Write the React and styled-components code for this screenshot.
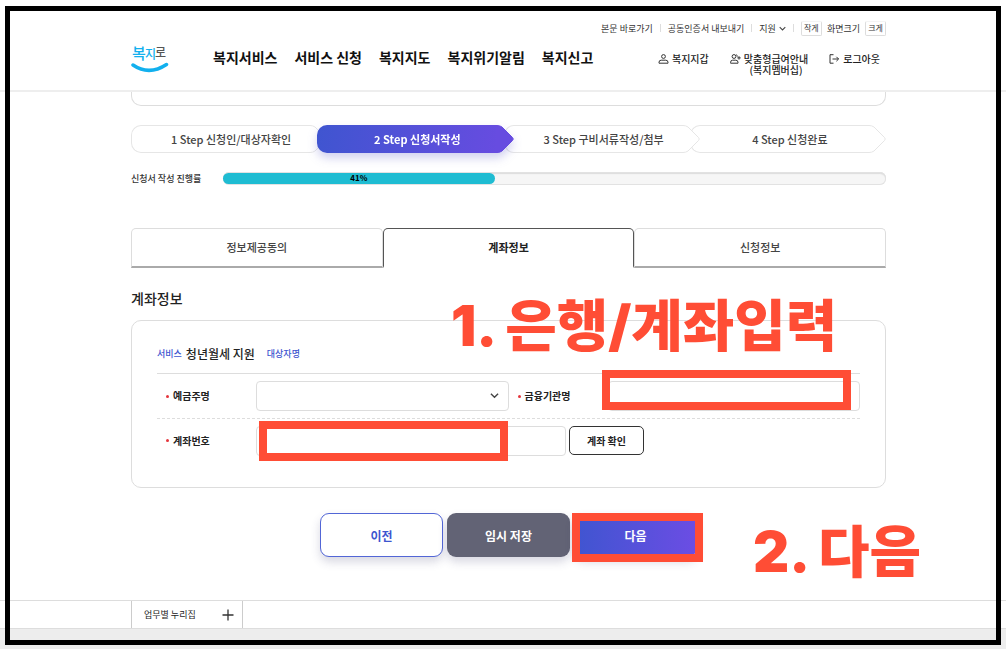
import React from "react";
import styled, { createGlobalStyle, css } from "styled-components";

const GlobalStyle = createGlobalStyle`
    * {
        box-sizing: border-box;
    }
    body {
        margin: 0;
        background: #ededed;
        color: #222;
        font-family: "Noto Sans CJK KR", "Noto Sans", sans-serif;
        font-size: 10px;
        line-height: 1;
    }
    button, input, select {
        font-family: inherit;
    }
    a {
        color: inherit;
        text-decoration: none;
    }
`;

const Page = styled.div`
    position: relative;
    min-height: 100vh;
    background: #ededed;
`;

const White = styled.div`
    background: #fff;
`;

const gutters = css`
    padding-left: 131px;
    padding-right: 120px;
`;

const Header = styled.header`
    ${gutters}
    display: flex;
    align-items: flex-start;
    padding-top: 20px;
    padding-bottom: 15px;
    border-bottom: 2px solid #eee;
`;

const LogoLink = styled.a`
    margin-top: 16px;
    width: 40px;
    height: 39px;
`;

const Nav = styled.nav`
    display: flex;
    gap: 17px;
    margin-top: 27px;
    margin-left: 42px;
    font-size: 14px;
    line-height: 20px;
    font-weight: 700;
    color: #111;
    white-space: nowrap;
`;

const HeaderRight = styled.div`
    margin-left: auto;
    white-space: nowrap;
`;

const Utility = styled.div`
    display: flex;
    align-items: center;
    justify-content: flex-end;
    gap: 7px;
    height: 16px;
    font-size: 9px;
    color: #333;
`;

const Bar = styled.span`
    width: 1px;
    height: 8px;
    background: #ddd;
`;

const Support = styled.a`
    display: flex;
    align-items: center;
    gap: 3px;
`;

const SizeGroup = styled.span`
    display: flex;
    align-items: center;
    gap: 5px;
`;

const SizeButton = styled.button`
    width: 21px;
    height: 15px;
    padding: 0;
    border: 1px solid #ddd;
    border-top-color: #f4f4f4;
    border-radius: 2px;
    background: #fff;
    color: #333;
    font-size: 8px;
    line-height: 12px;
`;

const MemberMenu = styled.div`
    display: flex;
    justify-content: flex-end;
    gap: 21px;
    margin-top: 17px;
    padding-right: 6px;
`;

const MemberLink = styled.a`
    display: flex;
    align-items: flex-start;
    gap: 3px;
    font-size: 10px;
    line-height: 11px;
    font-weight: 500;
    text-align: center;

    svg {
        margin-top: 1px;
    }
`;

const Main = styled.main`
    ${gutters}
    padding-bottom: 43px;
`;

const PreviousCard = styled.div`
    height: 14px;
    border: 1px solid #ddd;
    border-top: 0;
    border-radius: 0 0 10px 10px;
`;

const Steps = styled.ol`
    display: flex;
    margin: 19px 0 0;
    padding: 0 10px 0 0;
    list-style: none;
`;

const StepItem = styled.li`
    position: relative;
    flex: 1;
    display: flex;
    align-items: center;
    justify-content: center;
    height: 28px;
    margin-right: -10px;
    padding-left: 4px;
    z-index: ${(props) => props.$level};
    font-size: 11px;
    font-weight: ${(props) => (props.$active ? 700 : 500)};
    color: ${(props) => (props.$active ? "#fff" : "#444")};
    ${(props) => props.$active && "filter: drop-shadow(0 5px 5px rgba(70, 70, 190, 0.25));"}

    &::before {
        content: "";
        position: absolute;
        inset: 0 18px 0 0;
        border: ${(props) => (props.$active ? "0" : "1px solid #e6e6e6")};
        border-right: 0;
        border-radius: 10px 0 0 10px;
        background: ${(props) => (props.$active ? "linear-gradient(100deg, #3f55d0, #674ce0)" : "#fff")};
    }
`;

const StepText = styled.span`
    position: relative;
    white-space: nowrap;
`;

const StepTip = styled.svg`
    position: absolute;
    top: 0;
    right: 0;
`;

const Progress = styled.div`
    display: flex;
    align-items: center;
    margin-top: 19px;
    color: #333;
`;

const ProgressLabel = styled.span`
    width: 92px;
    font-size: 9px;
    line-height: 12px;
    font-weight: 500;
    white-space: nowrap;
`;

const ProgressTrack = styled.div`
    flex: 1;
    height: 13px;
    padding: 1px 0;
    border-radius: 6px;
    background: #f6f6f6;
    box-shadow: inset 0 0 0 1px #e2e2e2, inset 0 2px 1px #ddd;
`;

const ProgressFill = styled.div`
    height: 11px;
    border-radius: 6px;
    background: #1fbcd2;
    color: #000;
    font-size: 8px;
    line-height: 10px;
    font-weight: 700;
    text-align: center;
`;

const Tabs = styled.div`
    display: flex;
    margin-top: 43px;
`;

const Tab = styled.button`
    flex: 1;
    height: 40px;
    padding: 0 0 2px;
    border: 1px solid #ddd;
    border-bottom: 2px solid #aaa;
    border-radius: 5px 5px 0 0;
    background: #fff;
    font-size: 11px;
    font-weight: 500;
    color: #444;
    ${(props) =>
        props.$active &&
        css`
            border-color: #555;
            border-bottom-color: transparent;
            font-weight: 700;
            color: #222;
        `}
`;

const Title = styled.h2`
    margin: 20px 0 12px;
    font-size: 14px;
    line-height: 20px;
    font-weight: 500;
`;

const Card = styled.section`
    position: relative;
    padding: 22px 25px 25px;
    border: 1px solid #ddd;
    border-radius: 10px;
`;

const Summary = styled.div`
    display: flex;
    align-items: center;
    height: 31px;
    padding-bottom: 8px;
    border-bottom: 1px solid #ddd;
`;

const Tag = styled.span`
    color: #3d55cf;
    font-size: 9px;
    font-weight: 500;
    line-height: 12px;
`;

const ServiceName = styled.strong`
    margin: 0 12px 0 4px;
    font-size: 12px;
    line-height: 20px;
    font-weight: 500;
`;

const Row = styled.div`
    display: grid;
    grid-template-columns: ${(props) => (props.$single ? "99px 1fr" : "99px 1fr 99px 1fr")};
    align-items: center;
    height: ${(props) => (props.$single ? "43px" : "45px")};
    border-bottom: ${(props) => (props.$single ? "0" : "1px dashed #ddd")};
`;

const Label = styled.label`
    display: flex;
    align-items: center;
    gap: 4px;
    padding-left: 9px;
    font-size: 10px;
    font-weight: 700;

    &::before {
        content: "";
        width: 3px;
        height: 3px;
        border-radius: 50%;
        background: #e5353c;
    }
`;

const Field = styled.div`
    position: relative;
    display: flex;
    align-items: center;
    gap: 3px;
`;

const controlStyle = css`
    width: ${(props) => props.$width || "100%"};
    height: 30px;
    padding: 0 10px;
    border: 1px solid #ddd;
    border-radius: 4px;
    background: #fff;
    font-size: 10px;
`;

const TextInput = styled.input`
    ${controlStyle}
`;

const Select = styled.select`
    ${controlStyle}
    appearance: none;
`;

const SelectArrow = styled.span`
    position: absolute;
    right: 10px;
    pointer-events: none;
`;

const CheckButton = styled.button`
    width: 75px;
    height: 29px;
    padding: 0;
    border: 1px solid #333;
    border-radius: 5px;
    background: #fff;
    font-size: 10px;
    font-weight: 700;
    color: #222;
`;

const Actions = styled.div`
    display: flex;
    justify-content: center;
    gap: 4px;
    margin-top: 25px;
`;

const ActionSlot = styled.div`
    position: relative;
`;

const actionLooks = {
    prev: css`
        border: 1px solid #5266d6;
        background: #fff;
        color: #3d55cf;
    `,
    save: css`
        border: 0;
        background: #626375;
        color: #fff;
    `,
    next: css`
        border: 0;
        background: linear-gradient(90deg, #3f55d0, #6c4de4);
        color: #fff;
    `,
};

const ActionButton = styled.button`
    width: 123px;
    height: 44px;
    padding: 0;
    border-radius: 9px;
    font-size: 12px;
    font-weight: 700;
    box-shadow: 0 5px 10px rgba(60, 60, 110, 0.2);
    ${(props) => actionLooks[props.$look]}
`;

const Footer = styled.footer`
    ${gutters}
    border-top: 1px solid #ddd;
    border-bottom: 1px solid #ddd;
`;

const SiteButton = styled.button`
    display: flex;
    align-items: center;
    justify-content: space-between;
    width: 112px;
    height: 27px;
    padding: 0 8px 0 12px;
    border: 1px solid #ccc;
    border-width: 0 1px;
    background: #fff;
    color: #222;
    font-size: 9px;
`;

// guide marks that sit on top of the page
const Mark = styled.div`
    position: absolute;
    inset: ${(props) => props.$inset};
    z-index: 10;
    border: 8px solid #ff4d35;
    pointer-events: none;
`;

const Callout = styled.div`
    position: absolute;
    top: ${(props) => props.$top};
    left: ${(props) => props.$left};
    z-index: 10;
    color: #ff4d35;
    font-family: Inter, "Noto Sans CJK KR", sans-serif;
    font-size: 56px;
    line-height: 60px;
    font-weight: 900;
    white-space: nowrap;
    pointer-events: none;
`;

const Frame = styled.div`
    position: absolute;
    inset: 6px 5px 4px;
    z-index: 20;
    border: 5px solid #000;
    pointer-events: none;
`;

const Logo = () => (
    <svg width="40" height="39" viewBox="0 0 40 39" role="img" aria-label="복지로">
        <g fontFamily="Noto Sans CJK KR, sans-serif" fontWeight="500">
            <text x="1" y="23" fontSize="15" fill="#12b0ee">복</text>
            <text x="14" y="23" fontSize="12" fill="#12b0ee">지</text>
            <text x="24" y="21" fontSize="12" fill="#555">로</text>
        </g>
        <path d="M2 29 Q18 40 35.500 28.500" fill="none" stroke="#12b0ee" strokeWidth="3.500" strokeLinecap="round" />
    </svg>
);

const Chevron = ({ size }) => (
    <svg width={size} height={size} viewBox="0 0 10 10" fill="none" stroke="#444" strokeWidth="1.500">
        <path d="M1 3l4 4 4-4" />
    </svg>
);

const iconProps = { width: 11, height: 10, viewBox: "0 0 11 10", fill: "none", stroke: "#333", strokeWidth: 1 };

const UserIcon = () => (
    <svg {...iconProps}>
        <circle cx="5.500" cy="2.500" r="1.900" />
        <path d="M1 9.200V8.300Q1 6.200 3.200 6.200H7.800Q10 6.200 10 8.300V9.200Z" />
    </svg>
);

const UserPlusIcon = () => (
    <svg {...iconProps}>
        <circle cx="4" cy="2.500" r="1.900" />
        <path d="M.6 9.200V8.300Q.6 6.200 2.600 6.200H5.800Q8 6.200 8 8.300V9.200ZM9 2.200V5.600M7.300 3.900H10.700M6.200.7Q7.500 1.200 7.300 2.600" />
    </svg>
);

const LogoutIcon = () => (
    <svg {...iconProps}>
        <path d="M4.500.7H1V9.200H4.500M3.500 5H9.500M7.400 2.800L9.600 5 7.400 7.200" />
    </svg>
);

const menus = ["복지서비스", "서비스 신청", "복지지도", "복지위기알림", "복지신고"];

const steps = ["1 Step 신청인/대상자확인", "2 Step 신청서작성", "3 Step 구비서류작성/첨부", "4 Step 신청완료"];

const tabs = ["정보제공동의", "계좌정보", "신청정보"];

const Step = ({ text, level, active }) => (
    <StepItem $level={active ? 5 : level} $active={active}>
        <StepTip width="18" height="28" viewBox="0 0 18 28">
            <path
                d="M0 .5H1Q4 .5 6 2L16.500 12.500Q18 14 16.500 15.500L6 26Q4 27.500 1 27.500H0"
                fill={active ? "#674ce0" : "#fff"}
                stroke={active ? "#674ce0" : "#e6e6e6"}
            />
        </StepTip>
        <StepText>{text}</StepText>
    </StepItem>
);

function App() {
    let [tab, setTab] = React.useState(1);
    let progress = 41;

    return (
        <>
            <GlobalStyle />
            <Page>
                <White>
                    <Header>
                        <LogoLink href="#">
                            <Logo />
                        </LogoLink>
                        <Nav>
                            {menus.map((menu) => (
                                <a href="#" key={menu}>
                                    {menu}
                                </a>
                            ))}
                        </Nav>
                        <HeaderRight>
                            <Utility>
                                <a href="#">본문 바로가기</a>
                                <Bar />
                                <a href="#">공동인증서 내보내기</a>
                                <Bar />
                                <Support href="#">
                                    지원 <Chevron size={7} />
                                </Support>
                                <Bar />
                                <SizeGroup>
                                    <SizeButton>작게</SizeButton>
                                    화면크기
                                    <SizeButton>크게</SizeButton>
                                </SizeGroup>
                            </Utility>
                            <MemberMenu>
                                <MemberLink href="#">
                                    <UserIcon /> 복지지갑
                                </MemberLink>
                                <MemberLink href="#">
                                    <UserPlusIcon />
                                    <span>
                                        맞춤형급여안내
                                        <br />
                                        (복지멤버십)
                                    </span>
                                </MemberLink>
                                <MemberLink href="#">
                                    <LogoutIcon /> 로그아웃
                                </MemberLink>
                            </MemberMenu>
                        </HeaderRight>
                    </Header>

                    <Main>
                        <PreviousCard />
                        <Steps>
                            {steps.map((text, i) => (
                                <Step key={text} text={text} level={4 - i} active={i == 1} />
                            ))}
                        </Steps>
                        <Progress>
                            <ProgressLabel>신청서 작성 진행률</ProgressLabel>
                            <ProgressTrack>
                                <ProgressFill style={{ width: `${progress}%` }}>{progress}%</ProgressFill>
                            </ProgressTrack>
                        </Progress>

                        <Tabs>
                            {tabs.map((name, i) => (
                                <Tab key={name} $active={tab == i} onClick={() => setTab(i)}>
                                    {name}
                                </Tab>
                            ))}
                        </Tabs>

                        <Title>계좌정보</Title>
                        <Card>
                            <Callout $top="-25px" $left="319px">
                                1. 은행/계좌입력
                            </Callout>
                            <Summary>
                                <Tag>서비스</Tag>
                                <ServiceName>청년월세 지원</ServiceName>
                                <Tag>대상자명</Tag>
                            </Summary>
                            <Row>
                                <Label htmlFor="holder">예금주명</Label>
                                <Field>
                                    <Select id="holder" />
                                    <SelectArrow>
                                        <Chevron size={9} />
                                    </SelectArrow>
                                </Field>
                                <Label htmlFor="bank">금융기관명</Label>
                                <Field>
                                    <TextInput id="bank" />
                                    <Mark $inset="-11px 9px 1px -6px" />
                                </Field>
                            </Row>
                            <Row $single>
                                <Label htmlFor="account">계좌번호</Label>
                                <Field>
                                    <TextInput id="account" $width="310px" />
                                    <CheckButton>계좌 확인</CheckButton>
                                    <Mark $inset="-5px 352px -5px 3px" />
                                </Field>
                            </Row>
                        </Card>

                        <Actions>
                            <ActionSlot>
                                <ActionButton $look="prev">이전</ActionButton>
                            </ActionSlot>
                            <ActionSlot>
                                <ActionButton $look="save">임시 저장</ActionButton>
                            </ActionSlot>
                            <ActionSlot>
                                <ActionButton $look="next">다음</ActionButton>
                                <Mark $inset="0 -6px -5px -2px" />
                                <Callout $top="9px" $left="179px">
                                    2. 다음
                                </Callout>
                            </ActionSlot>
                        </Actions>
                    </Main>

                    <Footer>
                        <SiteButton>
                            업무별 누리집
                            <svg width="12" height="12" viewBox="0 0 12 12" stroke="#333" strokeWidth="1.300">
                                <path d="M6 .5v11M.5 6h11" />
                            </svg>
                        </SiteButton>
                    </Footer>
                </White>
                <Frame />
            </Page>
        </>
    );
}

export default App;
